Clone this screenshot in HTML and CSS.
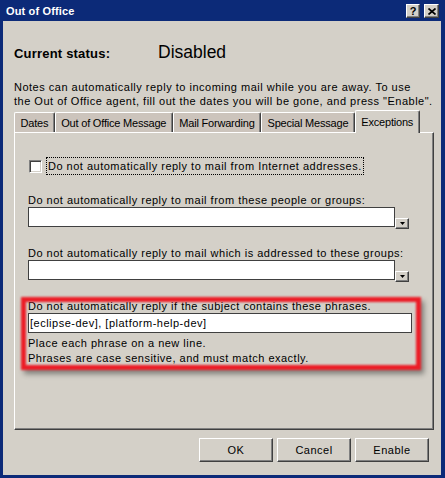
FILE: index.html
```html
<!DOCTYPE html>
<html>
<head>
<meta charset="utf-8">
<title>Out of Office</title>
<link rel="stylesheet" href="styles.css">
</head>
<body>
<div class="window">
  <div class="titlebar">
    <span class="title">Out of Office</span>
    <div class="tbtns">
      <span class="tbtn help">?</span>
      <span class="tbtn close"><svg width="8" height="7" viewBox="0 0 8 7"><path d="M0.5 0.5L7.5 6.5M7.5 0.5L0.5 6.5" stroke="#000" stroke-width="1.7"/></svg></span>
    </div>
  </div>
  <div class="client">
    <div class="status">
      <span class="status-label">Current status:</span>
      <span class="status-value">Disabled</span>
    </div>
    <p class="intro">Notes can automatically reply to incoming mail while you are away. To use<br>the Out of Office agent, fill out the dates you will be gone, and press "Enable".</p>
    <div class="tabs">
      <div class="tab">Dates</div>
      <div class="tab">Out of Office Message</div>
      <div class="tab">Mail Forwarding</div>
      <div class="tab">Special Message</div>
      <div class="tab active">Exceptions</div>
    </div>
    <div class="panel">
      <div class="check-row">
        <span class="checkbox"></span>
        <span class="focus">Do not automatically reply to mail from Internet addresses.</span>
      </div>
      <div class="field first">
        <div class="label">Do not automatically reply to mail from these people or groups:</div>
        <div class="input-row">
          <div class="input wide"></div>
          <div class="drop"><svg width="5" height="3" viewBox="0 0 5 3"><path d="M0 0H5L2.5 3Z" fill="#000"/></svg></div>
        </div>
      </div>
      <div class="field">
        <div class="label">Do not automatically reply to mail which is addressed to these groups:</div>
        <div class="input-row">
          <div class="input wide"></div>
          <div class="drop"><svg width="5" height="3" viewBox="0 0 5 3"><path d="M0 0H5L2.5 3Z" fill="#000"/></svg></div>
        </div>
      </div>
      <div class="phrases">
        <div class="label">Do not automatically reply if the subject contains these phrases.</div>
        <div class="input long">[eclipse-dev], [platform-help-dev]</div>
        <div class="hint">Place each phrase on a new line.<br>Phrases are case sensitive, and must match exactly.</div>
        <div class="highlight"></div>
      </div>
    </div>
    <div class="buttons">
      <button class="btn">OK</button>
      <button class="btn">Cancel</button>
      <button class="btn">Enable</button>
    </div>
  </div>
</div>
</body>
</html>
```

FILE: styles.css
```css
html, body {
  margin: 0;
  padding: 0;
  background: #d4d0c8;
}

.window {
  width: 445px;
  height: 478px;
  box-sizing: border-box;
  background: #0c2a78;
  padding: 0 4px 3px 3px;
  display: flex;
  flex-direction: column;
  font-family: "Liberation Sans", Arial, sans-serif;
  font-size: 11px;
  color: #000;
}

.titlebar {
  height: 21px;
  flex: none;
  display: flex;
  align-items: center;
  justify-content: space-between;
  padding: 0 2px 0 3px;
  color: #fff;
}

.title {
  font-weight: bold;
  font-size: 11px;
  line-height: 14px;
  letter-spacing: 0.15px;
}

.tbtns {
  display: flex;
  gap: 4px;
  margin-top: 1px;
}

.tbtn {
  width: 14px;
  height: 14px;
  box-sizing: border-box;
  background: #d4d0c8;
  border: 1px solid;
  border-color: #fff #404040 #404040 #fff;
  box-shadow: inset -1px -1px #808080;
  display: flex;
  align-items: center;
  justify-content: center;
  color: #000;
  font-weight: bold;
  font-size: 11px;
  line-height: 12px;
}

.tbtn.close {
  width: 15px;
}

.client {
  flex: 1;
  min-height: 0;
  background: #d4d0c8;
  display: flex;
  flex-direction: column;
  padding: 21px 7px 13px 11px;
}

.status {
  display: grid;
  grid-template-columns: 144px auto;
  align-items: baseline;
  height: 20px;
}

.status-label {
  font-weight: bold;
  font-size: 13px;
  letter-spacing: 0.2px;
}

.status-value {
  font-size: 17.5px;
  line-height: 20px;
}

.intro {
  margin: 18px 0 0;
  line-height: 14px;
  letter-spacing: 0.5px;
  white-space: nowrap;
}

.tabs {
  display: flex;
  align-items: flex-end;
  height: 22px;
  margin-top: 2px;
  flex: none;
}

.tab {
  height: 20px;
  box-sizing: border-box;
  padding: 3px 5.5px 2px;
  line-height: 14px;
  letter-spacing: -0.2px;
  background: #ccc4bc;
  border: 1px solid;
  border-bottom: 0;
  border-color: #fff #404040 #fff #fff;
  box-shadow: inset -1px 0 #808080;
  border-radius: 2px 2px 0 0;
  white-space: nowrap;
}

.tab.active {
  height: 23px;
  margin-bottom: -1px;
  padding-top: 4px;
  background: #d4d0c8;
  position: relative;
  z-index: 1;
}

.panel {
  flex: 1;
  min-height: 0;
  border: 1px solid;
  border-color: #fff #404040 #404040 #fff;
  box-shadow: inset -1px -1px #808080;
  padding: 24px 0 0 13px;
}

.check-row {
  display: flex;
  align-items: center;
  gap: 4px;
  margin-left: 1px;
}

.checkbox {
  width: 13px;
  height: 13px;
  box-sizing: border-box;
  background: #fff;
  border: 1px solid;
  border-color: #808080 #fff #fff #808080;
  box-shadow: inset 1px 1px #404040, inset -1px -1px #d4d0c8;
}

.focus {
  border: 1px dotted #000;
  padding: 1px;
  line-height: 14px;
  letter-spacing: 0.5px;
  white-space: nowrap;
}

.field {
  margin-top: 17px;
}

.field.first {
  margin-top: 18px;
}

.label {
  line-height: 14px;
  letter-spacing: 0.5px;
  white-space: nowrap;
}

.input-row {
  display: flex;
  align-items: flex-start;
}

.input {
  height: 20px;
  box-sizing: border-box;
  background: #fff;
  border: 1px solid #404040;
}

.input.wide {
  width: 367px;
}

.input.long {
  width: 384px;
  padding: 0 1px;
  line-height: 18px;
  letter-spacing: 0.5px;
  white-space: nowrap;
}

.drop {
  width: 14px;
  height: 11px;
  margin-top: 11px;
  box-sizing: border-box;
  background: #d4d0c8;
  border: 1px solid;
  border-color: #fff #404040 #404040 #fff;
  box-shadow: inset -1px -1px #808080;
  display: flex;
  align-items: center;
  justify-content: center;
}

.phrases {
  position: relative;
  margin-top: 17px;
}

.hint {
  margin-top: 3px;
  line-height: 15px;
  letter-spacing: 0.5px;
  white-space: nowrap;
}

.highlight {
  position: absolute;
  left: -7px;
  top: -2px;
  width: 400px;
  height: 73px;
  box-sizing: border-box;
  border: 5px solid #ec1c26;
  filter: blur(1px);
  box-shadow: 3px 4px 5px rgba(0, 0, 0, 0.4);
}

.buttons {
  display: flex;
  justify-content: flex-end;
  gap: 4px;
  margin-top: 8px;
  padding-right: 5px;
  flex: none;
}

.btn {
  width: 74px;
  height: 24px;
  box-sizing: border-box;
  padding: 0;
  font: inherit;
  letter-spacing: 0.5px;
  color: #000;
  background: #d4d0c8;
  border: 1px solid;
  border-color: #fff #404040 #404040 #fff;
  box-shadow: inset -1px -1px #808080;
}
```
